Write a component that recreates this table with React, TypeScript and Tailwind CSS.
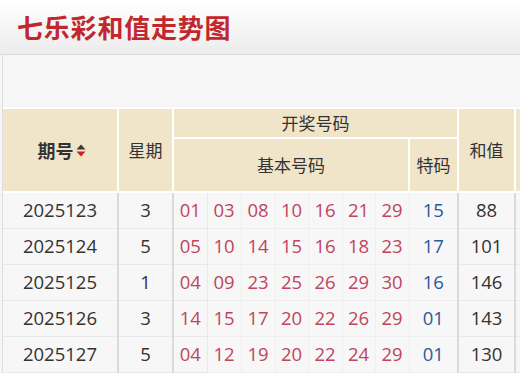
import React from "react";

const rows = [
  { id: "2025123", wk: "3", nums: ["01", "03", "08", "10", "16", "21", "29"], sp: "15", sum: "88" },
  { id: "2025124", wk: "5", nums: ["05", "10", "14", "15", "16", "18", "23"], sp: "17", sum: "101" },
  { id: "2025125", wk: "1", nums: ["04", "09", "23", "25", "26", "29", "30"], sp: "16", sum: "146" },
  { id: "2025126", wk: "3", nums: ["14", "15", "17", "20", "22", "26", "29"], sp: "01", sum: "143" },
  { id: "2025127", wk: "5", nums: ["04", "12", "19", "20", "22", "24", "29"], sp: "01", sum: "130" },
];

const th = "bg-[#f0e5c9] border-2 border-white text-[17px] font-normal text-[#333]";
const td = "bg-[#f7f7f7] border border-[#e8e8e8] text-center";

export default function App() {
  return (
    <div className="w-[520px] h-[373px] overflow-hidden bg-[#f6f6f6] font-['Noto_Sans_CJK_SC',sans-serif]">
      <div className="h-[55px] border-b border-[#dcdcdc] bg-gradient-to-b from-white to-[#ececec] flex items-center pl-[17px]">
        <h1 className="text-[26px] font-bold text-[#c1272d] leading-none tracking-[0.8px]">七乐彩和值走势图</h1>
      </div>
      <div className="ml-[2px] border-l border-[#dedede] pt-[52px] bg-[#f6f6f6]">
        <table className="border-collapse table-fixed text-[#333] w-[600px]">
          <colgroup>
            <col className="w-[115px]" />
            <col className="w-[55px]" />
            <col className="w-[34px]" />
            <col className="w-[34px]" />
            <col className="w-[34px]" />
            <col className="w-[33px]" />
            <col className="w-[34px]" />
            <col className="w-[33px]" />
            <col className="w-[34px]" />
            <col className="w-[49px]" />
            <col className="w-[57px]" />
            <col className="w-[88px]" />
          </colgroup>
          <thead>
            <tr className="h-[30px]">
              <th rowSpan={2} className="bg-[#f0e5c9] border-2 border-white border-l-0 text-[18px] font-bold text-[#333]">
                <span className="inline-flex items-center gap-[1px] pl-[4px]">
                  期号
                  <svg width="12" height="17" viewBox="0 0 12 17" className="mt-[1px]">
                    <path d="M1.5 7.5 L6 2.5 L10.5 7.5 Z" fill="#3a3a3a" />
                    <path d="M1.5 9.5 L6 14.5 L10.5 9.5 Z" fill="#d0201e" />
                  </svg>
                </span>
              </th>
              <th rowSpan={2} className={th}>星期</th>
              <th colSpan={8} className={th}>开奖号码</th>
              <th rowSpan={2} className={th}>和值</th>
              <th rowSpan={2} className={th}></th>
            </tr>
            <tr className="h-[54px]">
              <th colSpan={7} className={th}>基本号码</th>
              <th className={th}>特码</th>
            </tr>
          </thead>
          <tbody className="font-['Open_Sans','Noto_Sans_CJK_SC',sans-serif] text-[18.5px]">
            {rows.map((r) => (
              <tr key={r.id} className="h-[36px]">
                <td className={`${td} border-l-0 text-[#333]`}>{r.id}</td>
                <td className={`${td} border-l-2 border-l-[#dadada] text-[#333]`}>{r.wk}</td>
                {r.nums.map((n, i) => (
                  <td
                    key={i}
                    className={
                      i === 0
                        ? `${td} border-l-2 border-l-[#dadada] text-[#c0455e]`
                        : `${td} border-[#eeeeee] text-[#c0455e]`
                    }
                  >
                    {n}
                  </td>
                ))}
                <td className={`${td} border-[#eeeeee] text-[#2c5a98]`}>{r.sp}</td>
                <td className={`${td} border-l-2 border-l-[#dadada] text-[#333]`}>{r.sum}</td>
                <td className={`${td} border-l-2 border-l-[#dadada]`}></td>
              </tr>
            ))}
          </tbody>
        </table>
      </div>
    </div>
  );
}
